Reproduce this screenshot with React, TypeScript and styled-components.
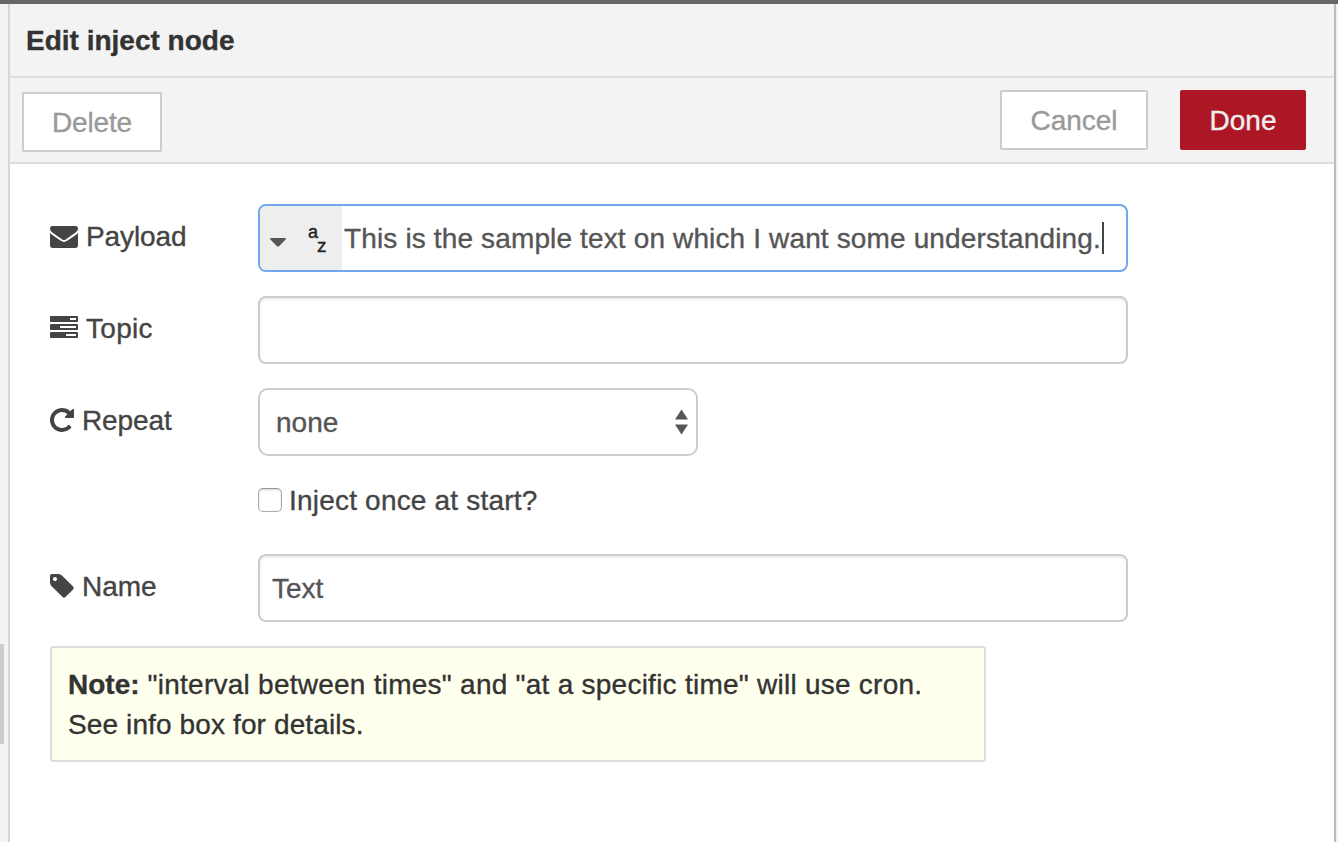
import React from "react";
import styled, { createGlobalStyle, css } from "styled-components";

const GlobalStyle = createGlobalStyle`
  *, *::before, *::after { box-sizing: border-box; }
  body {
    margin: 0;
    background: #f3f3f3;
    font-family: "Liberation Sans", Arial, Helvetica, sans-serif;
    font-size: 28px;
    line-height: 40px;
    color: #333;
  }
`;

const Page = styled.div`
  display: flex;
  flex-direction: column;
  width: 1338px;
  height: 842px;
  overflow: hidden;
`;

const TopStrip = styled.div`
  flex: none;
  height: 4px;
  background: #666;
`;

const Workspace = styled.div`
  flex: 1;
  display: flex;
  min-height: 0;
`;

const Gutter = styled.div`
  width: 8px;
  padding-top: 640px;
  background: #f3f3f3;
`;

const ScrollThumb = styled.div`
  width: 4px;
  height: 100px;
  background: #ccc;
`;

const Tray = styled.section`
  width: 1328px;
  display: flex;
  flex-direction: column;
  border-left: 2px solid #d7d7d7;
  border-right: 2px solid #bbb;
  background: #fff;
`;

const Text = styled.span<{ $spacing?: number }>`
  display: inline-block;
  padding-top: 1px;
  white-space: pre;
  letter-spacing: ${(p) => p.$spacing ?? 0}px;
  -webkit-text-stroke: 0.35px currentColor;
`;

const Header = styled.header`
  height: 74px;
  padding: 16px 0 0 16px;
  border-bottom: 2px solid #ddd;
  background: #f3f3f3;
  font-weight: 700;
`;

const Toolbar = styled.div`
  display: flex;
  align-items: flex-start;
  height: 86px;
  padding: 12px 28px 0 12px;
  border-bottom: 2px solid #ddd;
  background: #f3f3f3;
`;

const Button = styled.button<{ $width: number; $primary?: boolean }>`
  display: flex;
  justify-content: center;
  width: ${(p) => p.$width}px;
  height: 60px;
  padding: 8px 0 0;
  border: 2px solid #ccc;
  border-radius: 2px;
  background: #fff;
  color: #999;
  font: inherit;
  ${(p) =>
    p.$primary &&
    css`
      margin-left: 32px;
      border-color: #ad1625;
      background: #ad1625;
      color: #eee;
    `}
`;

const DeleteButton = styled(Button)`
  margin: 2px auto 0 0;
`;

const Form = styled.div`
  display: flex;
  flex-direction: column;
  gap: 24px;
  padding: 40px 0 0 40px;
`;

const Row = styled.div<{ $height?: number }>`
  display: flex;
  height: ${(p) => p.$height ?? 68}px;
`;

const Label = styled.label`
  display: flex;
  align-items: flex-start;
  width: 208px;
  padding-top: 12px;
  color: #444;
`;

const Icon = styled.svg<{ $top: number; $gap: number }>`
  flex: none;
  margin: ${(p) => p.$top}px ${(p) => p.$gap}px 0 0;
  fill: #444;
`;

const Field = styled.div<{ $focused?: boolean }>`
  display: flex;
  width: 870px;
  padding: 12px 12px 0;
  border: 2px solid #ccc;
  border-radius: 8px;
  background: #fff;
  box-shadow: inset 0 2px 2px rgba(0, 0, 0, 0.075);
  color: #555;
  ${(p) =>
    p.$focused &&
    css`
      padding: 0;
      overflow: hidden;
      border-color: #72a7ec;
      box-shadow: none;
    `}
`;

const TypeSelect = styled.div`
  display: flex;
  width: 82px;
  padding: 32px 0 0 10px;
  background: #eee;
`;

const TypeGlyph = styled.div`
  display: flex;
  margin: -16px 0 0 22px;
  color: #222;
  font-size: 18px;
  line-height: 20px;
  -webkit-text-stroke: 0.4px currentColor;
`;

const Lowered = styled.span`
  padding-top: 14px;
  margin-left: -1px;
  font-size: 19px;
`;

const FieldValue = styled.div`
  display: flex;
  padding: 12px 0 0 2px;
`;

const Caret = styled.span`
  width: 2px;
  height: 32px;
  margin: 4px 0 0 1px;
  background: #444;
`;

const Select = styled.div`
  display: flex;
  justify-content: space-between;
  width: 440px;
  padding: 12px 8px 0 16px;
  border: 2px solid #ccc;
  border-radius: 10px;
  background: #fff;
  color: #555;
`;

const SelectArrows = styled.svg`
  margin-top: 7px;
  fill: #555;
`;

const CheckRow = styled(Row)`
  padding-left: 208px;
  align-items: flex-start;
  color: #444;
`;

const Checkbox = styled.span`
  width: 24px;
  height: 24px;
  margin: 8px 7px 0 0;
  border: 1px solid #aaa;
  border-top-color: #999;
  border-radius: 5px;
  background: #fff;
  box-shadow: inset 0 1px 2px rgba(0, 0, 0, 0.18);
`;

const Note = styled.div`
  display: flex;
  flex-direction: column;
  width: 936px;
  height: 116px;
  padding: 16px;
  border: 2px solid #ddd;
  border-radius: 3px;
  background: #ffffee;
  color: #333;
`;

const NoteLine = styled.div`
  display: flex;
  height: 40px;
`;

const ENVELOPE =
  "M1792 710v794q0 66-47 113t-113 47h-1472q-66 0-113-47t-47-113v-794q44 49 101 87 362 246 497 345 57 42 92.5 65.5t94.5 48 110 24.5h2q51 0 110-24.5t94.5-48 92.5-65.5q170-123 498-345 57-39 100-87zm0-294q0 79-49 151t-122 123q-376 261-468 325-10 7-42.5 31t-54 38.5-52 32.5-57.5 27-50 9h-2q-23 0-50-9t-57.5-27-52-32.5-54-38.5-42.5-31q-91-64-262-182.5t-205-142.5q-62-42-117-115.5t-55-136.5q0-78 41.5-130t118.5-52h1472q65 0 112.5 47t47.5 113z";
const TASKS =
  "M1024 1408h640v-128h-640v128zm-384-512h1024v-128h-1024v128zm640-512h384v-128h-384v128zm512 832v256q0 26-19 45t-45 19h-1664q-26 0-45-19t-19-45v-256q0-26 19-45t45-19h1664q26 0 45 19t19 45zm0-512v256q0 26-19 45t-45 19h-1664q-26 0-45-19t-19-45v-256q0-26 19-45t45-19h1664q26 0 45 19t19 45zm0-512v256q0 26-19 45t-45 19h-1664q-26 0-45-19t-19-45v-256q0-26 19-45t45-19h1664q26 0 45 19t19 45z";
const REPEAT =
  "M1664 256v448q0 26-19 45t-45 19h-448q-42 0-59-40-17-39 14-69l138-138q-148-137-349-137-104 0-198.5 40.5t-163.5 109.5-109.5 163.5-40.5 198.5 40.5 198.5 109.5 163.5 163.5 109.5 198.5 40.5q119 0 225-52t179-147q7-10 23-12 15 0 25 9l137 138q9 8 9.5 20.5t-7.5 22.5q-109 132-264 204.5t-327 72.5q-156 0-298-61t-245-164-164-245-61-298 61-298 164-245 245-164 298-61q147 0 284.5 55.5t244.5 156.5l130-129q29-31 70-14 39 17 39 59z";
const TAG =
  "M576 448q0-53-37.5-90.5t-90.5-37.5-90.5 37.5-37.5 90.5 37.5 90.5 90.5 37.5 90.5-37.5 37.5-90.5zm1067 576q0 53-37 90l-491 492q-39 37-91 37-53 0-90-37l-715-716q-38-37-64.5-101t-26.5-117v-416q0-52 38-90t90-38h416q53 0 117 26.5t102 64.5l715 714q37 39 37 91z";

export default function App() {
  return (
    <Page>
      <GlobalStyle />
      <TopStrip />
      <Workspace>
        <Gutter>
          <ScrollThumb />
        </Gutter>
        <Tray>
          <Header>
            <Text>Edit inject node</Text>
          </Header>
          <Toolbar>
            <DeleteButton $width={140}>
              <Text $spacing={-0.15}>Delete</Text>
            </DeleteButton>
            <Button $width={148}>
              <Text>Cancel</Text>
            </Button>
            <Button $width={126} $primary>
              <Text>Done</Text>
            </Button>
          </Toolbar>
          <Form>
            <Row>
              <Label>
                <Icon $top={10} $gap={8} width="28" height="22" viewBox="0 256 1792 1408">
                  <path d={ENVELOPE} />
                </Icon>
                <Text $spacing={-0.1}>Payload</Text>
              </Label>
              <Field $focused>
                <TypeSelect>
                  <svg width="16" height="9" viewBox="0 0 16 9" fill="#555">
                    <path d="M1 0h14q1.500.4.6 1.400l-6.600 6.800q-1 .9-2 0L.4 1.400Q-.5.4 1 0z" />
                  </svg>
                  <TypeGlyph>
                    <span>a</span>
                    <Lowered>z</Lowered>
                  </TypeGlyph>
                </TypeSelect>
                <FieldValue>
                  <Text $spacing={0.14}>This is the sample text on which I want some understanding.</Text>
                  <Caret />
                </FieldValue>
              </Field>
            </Row>
            <Row>
              <Label>
                <Icon $top={8} $gap={8} width="28" height="22" viewBox="0 128 1792 1408">
                  <path d={TASKS} />
                </Icon>
                <Text $spacing={0.3}>Topic</Text>
              </Label>
              <Field />
            </Row>
            <Row>
              <Label>
                <Icon $top={8} $gap={8} width="24" height="24" viewBox="128 128 1536 1536">
                  <path d={REPEAT} />
                </Icon>
                <Text $spacing={-0.1}>Repeat</Text>
              </Label>
              <Select>
                <Text>none</Text>
                <SelectArrows width="13" height="26" viewBox="0 0 13 26">
                  <path d="M6.500.5L13 10.500H0zM0 15.500h13L6.500 25.500z" />
                </SelectArrows>
              </Select>
            </Row>
            <CheckRow $height={50}>
              <Checkbox />
              <Text $spacing={0.2}>Inject once at start?</Text>
            </CheckRow>
            <Row>
              <Label>
                <Icon $top={8} $gap={8} width="24" height="24" viewBox="128 128 1536 1536">
                  <path d={TAG} />
                </Icon>
                <Text>Name</Text>
              </Label>
              <Field>
                <Text>Text</Text>
              </Field>
            </Row>
            <Note>
              <NoteLine>
                <Text as="b">Note:</Text>
                <Text $spacing={0.25}> "interval between times" and "at a specific time" will use cron.</Text>
              </NoteLine>
              <NoteLine>
                <Text $spacing={0.12}>See info box for details.</Text>
              </NoteLine>
            </Note>
          </Form>
        </Tray>
      </Workspace>
    </Page>
  );
}
